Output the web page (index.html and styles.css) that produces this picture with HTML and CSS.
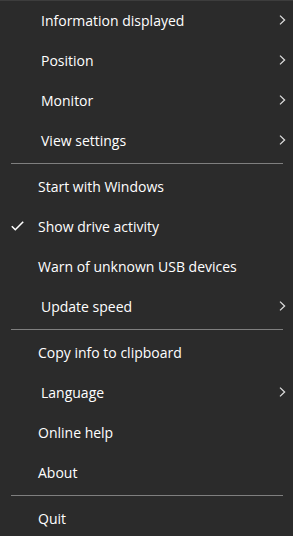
FILE: index.html
```html
<!DOCTYPE html>
<html>
<head>
<meta charset="utf-8">
<link rel="stylesheet" href="styles.css">
</head>
<body>
<div class="menu">
  <div class="item sub"><span class="label">Information displayed</span><svg class="chev" viewBox="0 0 7 10"><path d="M1 0.6 L5.6 5 L1 9.4" /></svg></div>
  <div class="item sub"><span class="label">Position</span><svg class="chev" viewBox="0 0 7 10"><path d="M1 0.6 L5.6 5 L1 9.4" /></svg></div>
  <div class="item sub"><span class="label">Monitor</span><svg class="chev" viewBox="0 0 7 10"><path d="M1 0.6 L5.6 5 L1 9.4" /></svg></div>
  <div class="item sub"><span class="label">View settings</span><svg class="chev" viewBox="0 0 7 10"><path d="M1 0.6 L5.6 5 L1 9.4" /></svg></div>
  <div class="sep"></div>
  <div class="item"><span class="label">Start with Windows</span></div>
  <div class="item"><svg class="check" viewBox="0 0 13 10"><path d="M0.8 5.2 L4.3 8.7 L12.2 0.8" /></svg><span class="label">Show drive activity</span></div>
  <div class="item"><span class="label">Warn of unknown USB devices</span></div>
  <div class="item sub"><span class="label">Update speed</span><svg class="chev" viewBox="0 0 7 10"><path d="M1 0.6 L5.6 5 L1 9.4" /></svg></div>
  <div class="sep"></div>
  <div class="item"><span class="label">Copy info to clipboard</span></div>
  <div class="item sub"><span class="label">Language</span><svg class="chev" viewBox="0 0 7 10"><path d="M1 0.6 L5.6 5 L1 9.4" /></svg></div>
  <div class="item"><span class="label">Online help</span></div>
  <div class="item"><span class="label">About</span></div>
  <div class="sep"></div>
  <div class="item"><span class="label">Quit</span></div>
</div>
</body>
</html>
```
FILE: styles.css
```css
html, body {
  margin: 0;
  padding: 0;
  background: #2b2b2b;
}
.menu {
  width: 293px;
  height: 536px;
  overflow: hidden;
  background: #2b2b2b;
  box-shadow: inset 0 1px 0 #3d3d3d;
  font-family: "Open Sans", "Noto Sans", sans-serif;
  font-size: 14px;
  color: #ffffff;
}
.item {
  position: relative;
  height: 40px;
  display: flex;
  align-items: center;
  padding-left: 38px;
}
.item.sub {
  padding-left: 41px;
}
.label {
  flex: 1;
  white-space: nowrap;
}
.chev {
  width: 7px;
  height: 10px;
  margin-right: 7px;
  fill: none;
  stroke: #dcdcdc;
  stroke-width: 1.3;
}
.check {
  position: absolute;
  left: 11px;
  top: 15px;
  width: 13px;
  height: 10px;
  fill: none;
  stroke: #ffffff;
  stroke-width: 1.6;
}
.sep {
  height: 1px;
  margin: 3px 10px 2px 11px;
  background: #7f7f7f;
}
```
